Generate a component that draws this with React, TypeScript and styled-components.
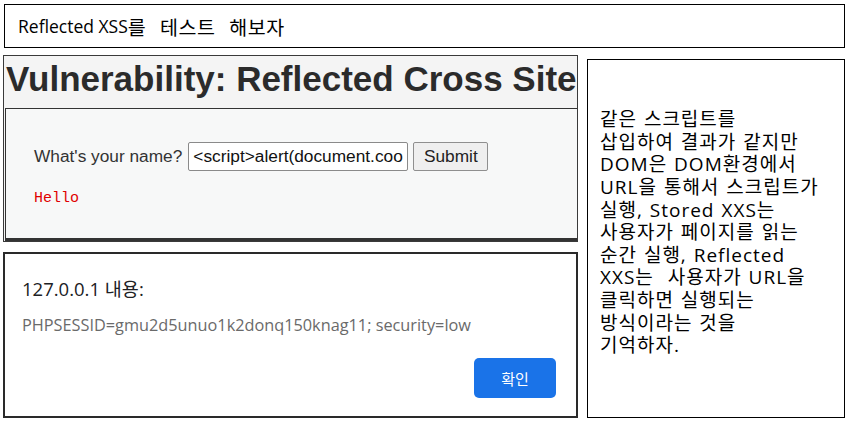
import React from "react";
import styled, { createGlobalStyle } from "styled-components";

const Global = createGlobalStyle`
  *, *::before, *::after { box-sizing: border-box; }
  html, body { margin: 0; padding: 0; background: #ffffff; }
  body { width: 850px; height: 424px; overflow: hidden; }
`;

const Page = styled.div`
  display: grid;
  grid-template-columns: 575px 258px;
  grid-template-rows: 44px auto;
  column-gap: 9px;
  row-gap: 7px;
  padding: 4px 0 0 3px;
`;

const TitleBar = styled.div`
  grid-column: 1 / span 2;
  margin-left: 1px;
  border: 1px solid #000;
  display: flex;
  align-items: center;
  padding-left: 13px;
  font-family: "Open Sans", "Noto Sans CJK KR", sans-serif;
  font-size: 19.5px;
  letter-spacing: 0.6px;
  word-spacing: 8px;
  color: #000;
  white-space: pre;
`;

const Latin = styled.span`
  font-size: 17.5px;
  letter-spacing: 0;
  word-spacing: 0;
`;

const LeftColumn = styled.div`
  display: flex;
  flex-direction: column;
  gap: 10px;
`;

const DvwaFrame = styled.div`
  height: 187px;
  border: 1px solid #3a3a3a;
  background: #f4f4f4;
  display: flex;
  flex-direction: column;
  overflow: hidden;
`;

const Heading = styled.h1`
  margin: 0;
  height: 52px;
  padding-left: 2px;
  font-family: "Liberation Sans", Arial, sans-serif;
  font-weight: bold;
  font-size: 35px;
  line-height: 46px;
  color: #2b2b2b;
  white-space: nowrap;
  overflow: hidden;
`;

const FormBox = styled.div`
  flex: 1;
  margin-left: 1px;
  border: 1px solid #333;
  border-bottom-width: 3px;
  border-right-width: 0;
  background: #f7f8f8;
  padding: 33px 0 0 28px;
  display: flex;
  flex-direction: column;
  gap: 19px;
  font-family: "Liberation Sans", Arial, sans-serif;
`;

const FormRow = styled.div`
  display: flex;
  align-items: center;
  font-size: 17.3px;
  color: #333;
`;

const NameInput = styled.input`
  width: 220px;
  height: 29px;
  margin: 0 5px 0 6px;
  padding: 1px 4px;
  border: 1px solid #8a8a8a;
  border-radius: 2px;
  background: #fff;
  font-family: "Liberation Sans", Arial, sans-serif;
  font-size: 17.3px;
  color: #111;
  outline: none;
`;

const SubmitButton = styled.button`
  width: 75px;
  height: 29px;
  border: 1px solid #8f8f8f;
  border-radius: 2px;
  background: #efefef;
  font-family: "Liberation Sans", Arial, sans-serif;
  font-size: 17.3px;
  color: #222;
  padding: 0;
`;

const Hello = styled.div`
  font-family: "Liberation Mono", monospace;
  font-size: 15px;
  color: #e00000;
`;

const AlertBox = styled.div`
  height: 166px;
  border: 2px solid #2a2a2a;
  background: #fff;
  padding: 23px 20px 0 17px;
  display: flex;
  flex-direction: column;
  font-family: "Open Sans", "Noto Sans CJK KR", sans-serif;
`;

const AlertTitle = styled.div`
  font-size: 18.5px;
  color: #202124;
  line-height: 24px;
`;

const AlertMessage = styled.div`
  margin-top: 14px;
  font-size: 16.3px;
  color: #6a6a6a;
  line-height: 20px;
  white-space: nowrap;
`;

const ButtonRow = styled.div`
  display: flex;
  justify-content: flex-end;
  margin-top: 23px;
`;

const ConfirmButton = styled.button`
  width: 82px;
  height: 40px;
  border: none;
  border-radius: 5px;
  background: #1a73e8;
  color: #fff;
  font-family: "Noto Sans CJK KR", sans-serif;
  font-size: 15px;
  padding: 0;
`;

const NoteBox = styled.div`
  margin-top: 4px;
  height: 359px;
  border: 1px solid #000;
  display: flex;
  flex-direction: column;
  justify-content: center;
  padding: 0 0 12px 12px;
  font-family: "Open Sans", "Noto Sans CJK KR", sans-serif;
  font-size: 19px;
  letter-spacing: 1px;
  word-spacing: 1px;
  line-height: 22.6px;
  color: #000;
`;

const NoteLine = styled.div`
  white-space: pre;
`;

const noteLines = [
  "같은 스크립트를",
  "삽입하여 결과가 같지만",
  "DOM은 DOM환경에서",
  "URL을 통해서 스크립트가",
  "실행, Stored XXS는",
  "사용자가 페이지를 읽는",
  "순간 실행, Reflected",
  "XXS는  사용자가 URL을",
  "클릭하면 실행되는",
  "방식이라는 것을",
  "기억하자.",
];

export default function App() {
  return (
    <>
      <Global />
      <Page>
        <TitleBar>
          <Latin>Reflected XSS</Latin>를 테스트 해보자
        </TitleBar>
        <LeftColumn>
          <DvwaFrame>
            <Heading>Vulnerability: Reflected Cross Site Scripting (XSS)</Heading>
            <FormBox>
              <FormRow>
                What's your name?
                <NameInput readOnly value="<script>alert(document.cookie)</script>" />
                <SubmitButton>Submit</SubmitButton>
              </FormRow>
              <Hello>Hello</Hello>
            </FormBox>
          </DvwaFrame>
          <AlertBox>
            <AlertTitle>127.0.0.1 내용:</AlertTitle>
            <AlertMessage>PHPSESSID=gmu2d5unuo1k2donq150knag11; security=low</AlertMessage>
            <ButtonRow>
              <ConfirmButton>확인</ConfirmButton>
            </ButtonRow>
          </AlertBox>
        </LeftColumn>
        <NoteBox>
          {noteLines.map((l, i) => (
            <NoteLine key={i}>{l}</NoteLine>
          ))}
        </NoteBox>
      </Page>
    </>
  );
}
